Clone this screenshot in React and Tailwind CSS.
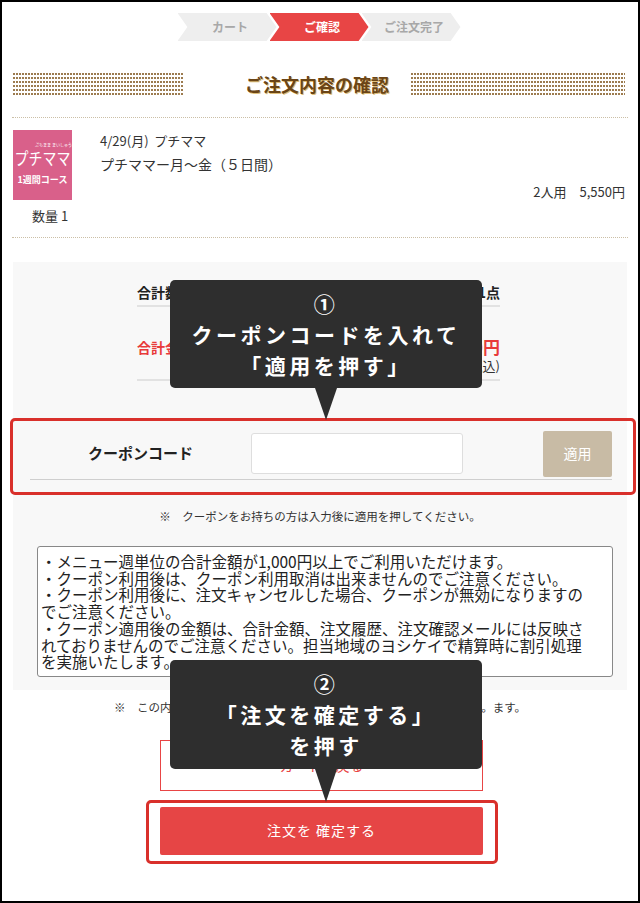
import React from 'react';

const font = "font-['Noto_Sans_CJK_JP','Noto_Sans',sans-serif]";

const Step = ({ label, active }) => (
    <div
        className={`w-[99px] h-[28px] flex items-center justify-center pl-[6px] text-[12px] font-bold [clip-path:polygon(0_0,90%_0,100%_50%,90%_100%,0_100%,10%_50%)]
                    ${active ? 'bg-[#e84545] text-white' : 'bg-[#eeeeee] text-[#a8a8a8]'}`}
    >
        {label}
    </div>
);

const Dots = ({ className }) => (
    <div
        className={`h-[23px] bg-[linear-gradient(90deg,#ffffff_1px,transparent_1px),linear-gradient(#9c7b4f_2px,transparent_2px)] bg-[length:3px_4px] ${className}`}
    />
);

const Tooltip = ({ className, lines, arrowH }) => (
    <div className={`absolute left-[168px] w-[312px] ${className}`}>
        <div className="bg-[#2e2e2e] rounded-[5px] h-full flex flex-col items-center justify-center text-white font-bold text-[21px] leading-[31px] tracking-[3.5px]">
            {lines.map((l) => (
                <div key={l}>{l}</div>
            ))}
        </div>
        <div
            className="absolute left-[145px] top-full w-0 h-0 border-x-[11px] border-x-transparent border-t-[#2e2e2e]"
            style={{ borderTopWidth: arrowH }}
        />
    </div>
);

export default function App() {
    return (
        <div className={`relative w-[640px] h-[903px] border-2 border-black bg-white overflow-hidden text-[#222] ${font}`}>
            {/* steps */}
            <div className="flex justify-center mt-[11px] pr-[2px]">
                <Step label="カート" />
                <div className="-ml-[7px]"><Step label="ご確認" active /></div>
                <div className="-ml-[7px]"><Step label="ご注文完了" /></div>
            </div>

            {/* title */}
            <div className="flex items-center mt-[31px] ml-[10px]">
                <Dots className="w-[172px]" />
                <h1 className="ml-[61px] w-[147px] text-[18px] leading-[24px] font-bold text-[#6b4516] whitespace-nowrap [text-shadow:1px_1px_0_#e0bf7a]">
                    ご注文内容の確認
                </h1>
                <Dots className="ml-[18px] w-[215px]" />
            </div>

            {/* product */}
            <div className="mx-[10px] mt-[21px] border-y border-dotted border-[#cbbfa6] h-[121px] flex pt-[12px]">
                <div className="w-[80px] flex flex-col">
                    <div className="ml-[1px] w-[59px] h-[70px] bg-[#d9608a] flex flex-col items-center text-white">
                        <div className="text-[4px] leading-[5px] mt-[13px] ml-[22px] whitespace-nowrap">ぷちまま まいしゅう</div>
                        <div className="text-[14px] leading-[20px] scale-y-[1.2] whitespace-nowrap">プチママ</div>
                        <div className="text-[9px] leading-[12px] font-bold mt-[6px] whitespace-nowrap">1週間コース</div>
                    </div>
                    <div className="ml-[20px] mt-[7px] text-[13px] leading-[18px] text-[#333]">数量 1</div>
                </div>
                <div className="flex-1 pl-[8px] pr-[3px] pt-[2px] text-[13px] text-[#333]">
                    <div className="leading-[18px]">4/29(月)&nbsp; プチママ</div>
                    <div className="leading-[18px] mt-[5px] text-[14px]">プチママー月～金（５日間）</div>
                    <div className="leading-[18px] mt-[10px] text-right">2人用　5,550円</div>
                </div>
            </div>

            {/* gray panel */}
            <div className="mx-[11px] mt-[24px] bg-[#f8f8f8] pt-[17px] pb-[13px]">
                <div className="w-[363px] ml-[124px]">
                    <div className="flex justify-between items-center h-[28px] border-b-2 border-[#e2e2e2] text-[14px] font-bold">
                        <span>合計数量</span>
                        <span>1点</span>
                    </div>
                    <div className="flex justify-between items-start h-[74px] border-b-2 border-[#e2e2e2] pt-[30px]">
                        <span className="text-[14px] font-bold text-[#e83a3a] leading-[20px]">合計金額</span>
                        <div className="text-right">
                            <div className="text-[17px] font-bold text-[#e83a3a] leading-[20px]">5,550円</div>
                            <div className="text-[13px] leading-[18px] text-[#333]">(税込)</div>
                        </div>
                    </div>
                </div>

                {/* coupon */}
                <div className="ml-[17px] mr-[15px] mt-[47px] flex items-center h-[52px] border-b border-[#cfcfcf]">
                    <span className="ml-[58px] w-[163px] text-[15px] font-bold text-[#222]">クーポンコード</span>
                    <input className="w-[212px] h-[41px] bg-white border border-[#dedede] rounded-[3px] outline-none" />
                    <button className="ml-auto w-[69px] h-[46px] bg-[#c8bba5] text-white text-[14px] rounded-[2px]">適用</button>
                </div>

                <p className="mt-[28px] text-center text-[11.5px] leading-[16px] text-[#333]">
                    ※　クーポンをお持ちの方は入力後に適用を押してください。
                </p>

                <div className="ml-[24px] mr-[14px] mt-[22px] border border-[#888] rounded-[3px] bg-white px-[3px] py-[6px] text-[15.5px] leading-[16.7px] text-[#222] whitespace-nowrap">
                    <div>・メニュー週単位の合計金額が1,000円以上でご利用いただけます。</div>
                    <div>・クーポン利用後は、クーポン利用取消は出来ませんのでご注意ください。</div>
                    <div>・クーポン利用後に、注文キャンセルした場合、クーポンが無効になりますの</div>
                    <div>でご注意ください。</div>
                    <div>・クーポン適用後の金額は、合計金額、注文履歴、注文確認メールには反映さ</div>
                    <div>れておりませんのでご注意ください。担当地域のヨシケイで精算時に割引処理</div>
                    <div>を実施いたします。</div>
                </div>
            </div>

            <p className="mt-[9px] text-center text-[11.5px] leading-[16px] text-[#333]">
                ※　この内容でよろしければ、注文を確定するボタンを押してください。ます。
            </p>

            <div className="flex flex-col items-center mt-[25px] pl-[3px]">
                <button className="w-[323px] h-[51px] border border-[#e84545] bg-white text-[#e84545] text-[14px]">カートに戻る</button>
                <button className="mt-[16px] w-[323px] h-[48px] bg-[#e64545] rounded-[2px] text-white text-[14px] tracking-[1px]">注文を 確定する</button>
            </div>

            {/* annotations */}
            <div className="absolute left-[8px] top-[416px] w-[626px] h-[77px] border-[3px] border-[#d9302b] rounded-[5px]" />
            <div className="absolute left-[144px] top-[798px] w-[352px] h-[64px] border-[3px] border-[#d9302b] rounded-[5px]" />

            <Tooltip className="top-[278px] h-[108px]" lines={['①', 'クーポンコードを入れて', '「適用を押す」']} arrowH={32} />
            <Tooltip className="top-[658px] h-[109px]" lines={['②', '「注文を確定する」', 'を押す']} arrowH={33} />
        </div>
    );
}
